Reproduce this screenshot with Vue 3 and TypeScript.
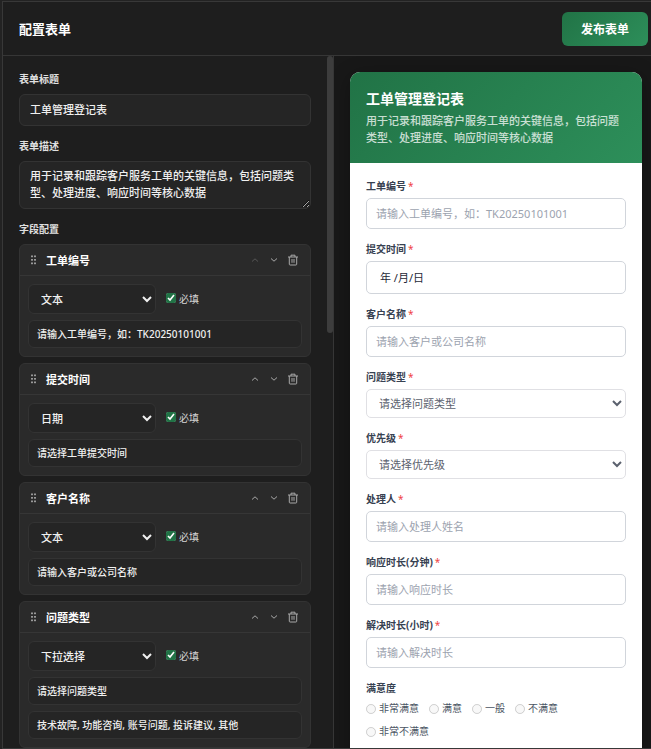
<script setup lang="ts">
import { ref } from 'vue'

interface Field {
  name: string
  type: string
  required: boolean
  placeholder: string
  options?: string
}

interface PreviewField {
  label: string
  kind: 'text' | 'date' | 'select'
  placeholder: string
}

const title = ref('工单管理登记表')
const description = ref('用于记录和跟踪客户服务工单的关键信息，包括问题类型、处理进度、响应时间等核心数据')

const fields = ref<Field[]>([
  { name: '工单编号', type: '文本', required: true, placeholder: '请输入工单编号，如：TK20250101001' },
  { name: '提交时间', type: '日期', required: true, placeholder: '请选择工单提交时间' },
  { name: '客户名称', type: '文本', required: true, placeholder: '请输入客户或公司名称' },
  {
    name: '问题类型',
    type: '下拉选择',
    required: true,
    placeholder: '请选择问题类型',
    options: '技术故障, 功能咨询, 账号问题, 投诉建议, 其他',
  },
])

const preview: PreviewField[] = [
  { label: '工单编号', kind: 'text', placeholder: '请输入工单编号，如：TK20250101001' },
  { label: '提交时间', kind: 'date', placeholder: '年 /月/日' },
  { label: '客户名称', kind: 'text', placeholder: '请输入客户或公司名称' },
  { label: '问题类型', kind: 'select', placeholder: '请选择问题类型' },
  { label: '优先级', kind: 'select', placeholder: '请选择优先级' },
  { label: '处理人', kind: 'text', placeholder: '请输入处理人姓名' },
  { label: '响应时长(分钟)', kind: 'text', placeholder: '请输入响应时长' },
  { label: '解决时长(小时)', kind: 'text', placeholder: '请输入解决时长' },
]

const ratings = ['非常满意', '满意', '一般', '不满意', '非常不满意']
</script>

<template>
  <div class="shell">
    <div class="dialog">
      <header class="bar">
        <h1>配置表单</h1>
        <button type="button" class="publish">发布表单</button>
      </header>
      <main class="columns">
        <section class="config">
          <div class="config-body">
            <label class="caption" for="form-title">表单标题</label>
            <input id="form-title" v-model="title" class="box title-box" type="text" />
            <label class="caption" for="form-desc">表单描述</label>
            <textarea id="form-desc" v-model="description" class="box desc-box" rows="2"></textarea>
            <h2 class="caption">字段配置</h2>
            <div class="cards">
              <article v-for="(field, i) in fields" :key="i" class="card">
                <div class="card-head">
                  <svg class="grip" viewBox="0 0 8 12" aria-hidden="true">
                    <template v-for="y in [1.5, 5, 8.5]" :key="y">
                      <rect x="1" :y="y" width="2" height="1.7" />
                      <rect x="4" :y="y" width="2" height="1.7" />
                    </template>
                  </svg>
                  <h3>{{ field.name }}</h3>
                  <button type="button" class="tool" :disabled="i === 0" aria-label="上移">
                    <svg viewBox="0 0 12 12"><path d="M3 7.5 6 4.8 9 7.5" /></svg>
                  </button>
                  <button type="button" class="tool" aria-label="下移">
                    <svg viewBox="0 0 12 12"><path d="M3 4.5 6 7.2 9 4.5" /></svg>
                  </button>
                  <button type="button" class="tool" aria-label="删除">
                    <svg viewBox="0 0 12 12">
                      <path d="M1 3h10M4 3V1.2h4V3M2.3 3v7.2q0 .8.8.8h5.8q.8 0 .8-.8V3M5 5v3.8M7 5v3.8" />
                    </svg>
                  </button>
                </div>
                <div class="card-body">
                  <div class="type-row">
                    <select v-model="field.type" class="box type-box" aria-label="字段类型">
                      <option>文本</option>
                      <option>日期</option>
                      <option>下拉选择</option>
                    </select>
                    <label class="required">
                      <input v-model="field.required" type="checkbox" />
                      必填
                    </label>
                  </div>
                  <input v-model="field.placeholder" class="box small-box" type="text" aria-label="提示文字" />
                  <input
                    v-if="field.options"
                    v-model="field.options"
                    class="box small-box"
                    type="text"
                    aria-label="选项"
                  />
                </div>
              </article>
            </div>
          </div>
          <div class="track"><div class="thumb"></div></div>
        </section>

        <section class="preview">
          <form class="sheet" @submit.prevent>
            <div class="banner">
              <h2>{{ title }}</h2>
              <p>{{ description }}</p>
            </div>
            <div class="sheet-body">
              <div v-for="(item, i) in preview" :key="i" class="group">
                <label :for="`preview-${i}`">{{ item.label }}<span class="star">*</span></label>
                <select v-if="item.kind === 'select'" :id="`preview-${i}`" class="entry entry-select">
                  <option>{{ item.placeholder }}</option>
                </select>
                <input
                  v-else
                  :id="`preview-${i}`"
                  class="entry"
                  :class="{ 'entry-date': item.kind === 'date' }"
                  type="text"
                  :placeholder="item.placeholder"
                />
              </div>
              <fieldset class="group">
                <legend>满意度</legend>
                <div class="ratings">
                  <label v-for="rating in ratings" :key="rating">
                    <input type="radio" name="rating" :value="rating" disabled />{{ rating }}
                  </label>
                </div>
              </fieldset>
            </div>
          </form>
        </section>
      </main>
    </div>
  </div>
</template>

<style>
body {
  margin: 0;
  background: #1e1e1e;
}
</style>

<style scoped>
* {
  box-sizing: border-box;
}

.shell {
  height: 100vh;
  padding: 1px 0 0 2px;
  background: #232323;
  color: #f0f0f0;
  font-family: 'Noto Sans', 'Noto Sans CJK SC', sans-serif;
  font-size: 11px;
}

h1,
h2,
h3,
p {
  margin: 0;
}

input,
select,
textarea,
button {
  margin: 0;
  font-family: inherit;
  font-size: inherit;
  color: inherit;
}

.dialog {
  display: flex;
  flex-direction: column;
  height: 100%;
  overflow: hidden;
  background: #1e1e1e;
  border: 1px solid #383838;
  border-right: 0;
}

.bar {
  display: flex;
  flex: none;
  align-items: center;
  justify-content: space-between;
  height: 54px;
  padding: 0 3px 0 16px;
  border-bottom: 1px solid #363636;
}

.bar h1 {
  font-size: 13px;
  font-weight: 700;
  color: #fff;
}

.publish {
  height: 34px;
  padding: 0 19px;
  border: 0;
  border-radius: 6px;
  background: linear-gradient(135deg, #217346, #2d8f5a);
  color: #fff;
  font-size: 12px;
  font-weight: 700;
}

.columns {
  display: grid;
  flex: 1;
  grid-template-columns: minmax(0, 331fr) minmax(0, 317fr);
  min-height: 0;
}

.config {
  display: flex;
  min-height: 0;
  border-right: 1px solid #363636;
}

.config-body {
  flex: 1;
  min-width: 0;
  padding: 16px;
  overflow: hidden;
}

.track {
  flex: none;
  width: 6px;
}

.thumb {
  height: 40%;
  border-radius: 3px;
  background: #3d3d3d;
}

.caption {
  display: block;
  margin-bottom: 8px;
  color: #e0e0e0;
  font-size: 10px;
  font-weight: 700;
  line-height: 14px;
}

.box {
  display: block;
  width: 100%;
  border: 1px solid #333;
  border-radius: 6px;
  background: #252525;
  font-weight: 500;
  outline: none;
}

.title-box {
  height: 32px;
  margin-bottom: 13px;
  padding: 0 10px 2px;
}

.desc-box {
  margin-bottom: 13px;
  padding: 5px 10px 7px;
  line-height: 17px;
  resize: vertical;
}

.cards {
  display: flex;
  flex-direction: column;
  gap: 6px;
}

.card {
  border: 1px solid #333;
  border-radius: 6px;
  background: #2a2a2a;
}

.card-head {
  display: flex;
  align-items: center;
  height: 31px;
  padding: 0 8px 0 10px;
  border-bottom: 1px solid #363636;
}

.card-head h3 {
  flex: 1;
  margin-left: 8px;
  color: #fff;
  font-size: 11px;
  font-weight: 700;
}

.grip {
  width: 8px;
  height: 12px;
  fill: #999;
}

.tool {
  display: flex;
  align-items: center;
  justify-content: center;
  width: 19px;
  height: 19px;
  padding: 0;
  border: 0;
  background: none;
  color: #a8a8a8;
}

.tool:disabled {
  opacity: 0.35;
}

.tool svg {
  width: 12px;
  height: 12px;
  fill: none;
  stroke: currentColor;
  stroke-width: 1;
}

.card-body {
  display: flex;
  flex-direction: column;
  gap: 6px;
  padding: 8px;
}

.type-row {
  display: flex;
  align-items: center;
  gap: 10px;
}

.type-box {
  width: 128px;
  height: 30px;
  padding: 0 0 0 8px;
}

.required {
  display: flex;
  align-items: center;
  gap: 3px;
  padding-bottom: 2px;
  color: #d4d4d4;
  font-size: 10px;
}

.required input {
  width: 10px;
  height: 10px;
  accent-color: #217346;
}

.small-box {
  height: 28px;
  padding: 0 8px 2px;
  font-size: 10px;
}

.preview {
  min-height: 0;
  padding: 16px 9px 0 16px;
  overflow: hidden;
  background: #181818;
}

.sheet {
  overflow: hidden;
  border-radius: 10px;
  background: #fff;
  box-shadow: 0 4px 20px rgba(0, 0, 0, 0.3);
}

.banner {
  padding: 16px;
  background: linear-gradient(135deg, #217346, #2d8f5a);
  color: #fff;
}

.banner h2 {
  margin-bottom: 3px;
  font-size: 14px;
  font-weight: 700;
  line-height: 21px;
}

.banner p {
  padding-bottom: 1px;
  font-size: 11px;
  font-weight: 500;
  line-height: 17px;
  opacity: 0.75;
}

.sheet-body {
  display: flex;
  flex-direction: column;
  gap: 13px;
  padding: 16px 16px 32px;
}

.group {
  display: flex;
  flex-direction: column;
  gap: 5px;
  min-width: 0;
  margin: 0;
  padding: 0;
  border: 0;
}

.group > label,
.group legend {
  padding: 0;
  color: #374151;
  font-size: 10px;
  font-weight: 700;
  line-height: 14px;
}

.star {
  margin-left: 2px;
  color: #ef4444;
  font-weight: 400;
}

.entry {
  width: 100%;
  height: 31px;
  padding: 0 9px;
  border: 1px solid #d1d5db;
  border-radius: 5px;
  background: #fff;
  color: #1f2937;
  outline: none;
}

.entry::placeholder {
  color: #9ca3af;
}

.entry-date {
  height: 33px;
  padding: 0 13px;
}

.entry-date::placeholder {
  color: #1f2937;
}

.entry-select {
  height: 29px;
  padding: 0 0 0 8px;
  border-color: #e0e0e4;
  color: #5b616e;
}

.ratings {
  display: flex;
  flex-wrap: wrap;
  gap: 8px 10px;
  margin-top: 6px;
}

.ratings label {
  display: flex;
  align-items: center;
  gap: 3px;
  color: #4b5563;
  font-size: 10px;
  line-height: 15px;
}

.ratings input {
  width: 10px;
  height: 10px;
}
</style>
